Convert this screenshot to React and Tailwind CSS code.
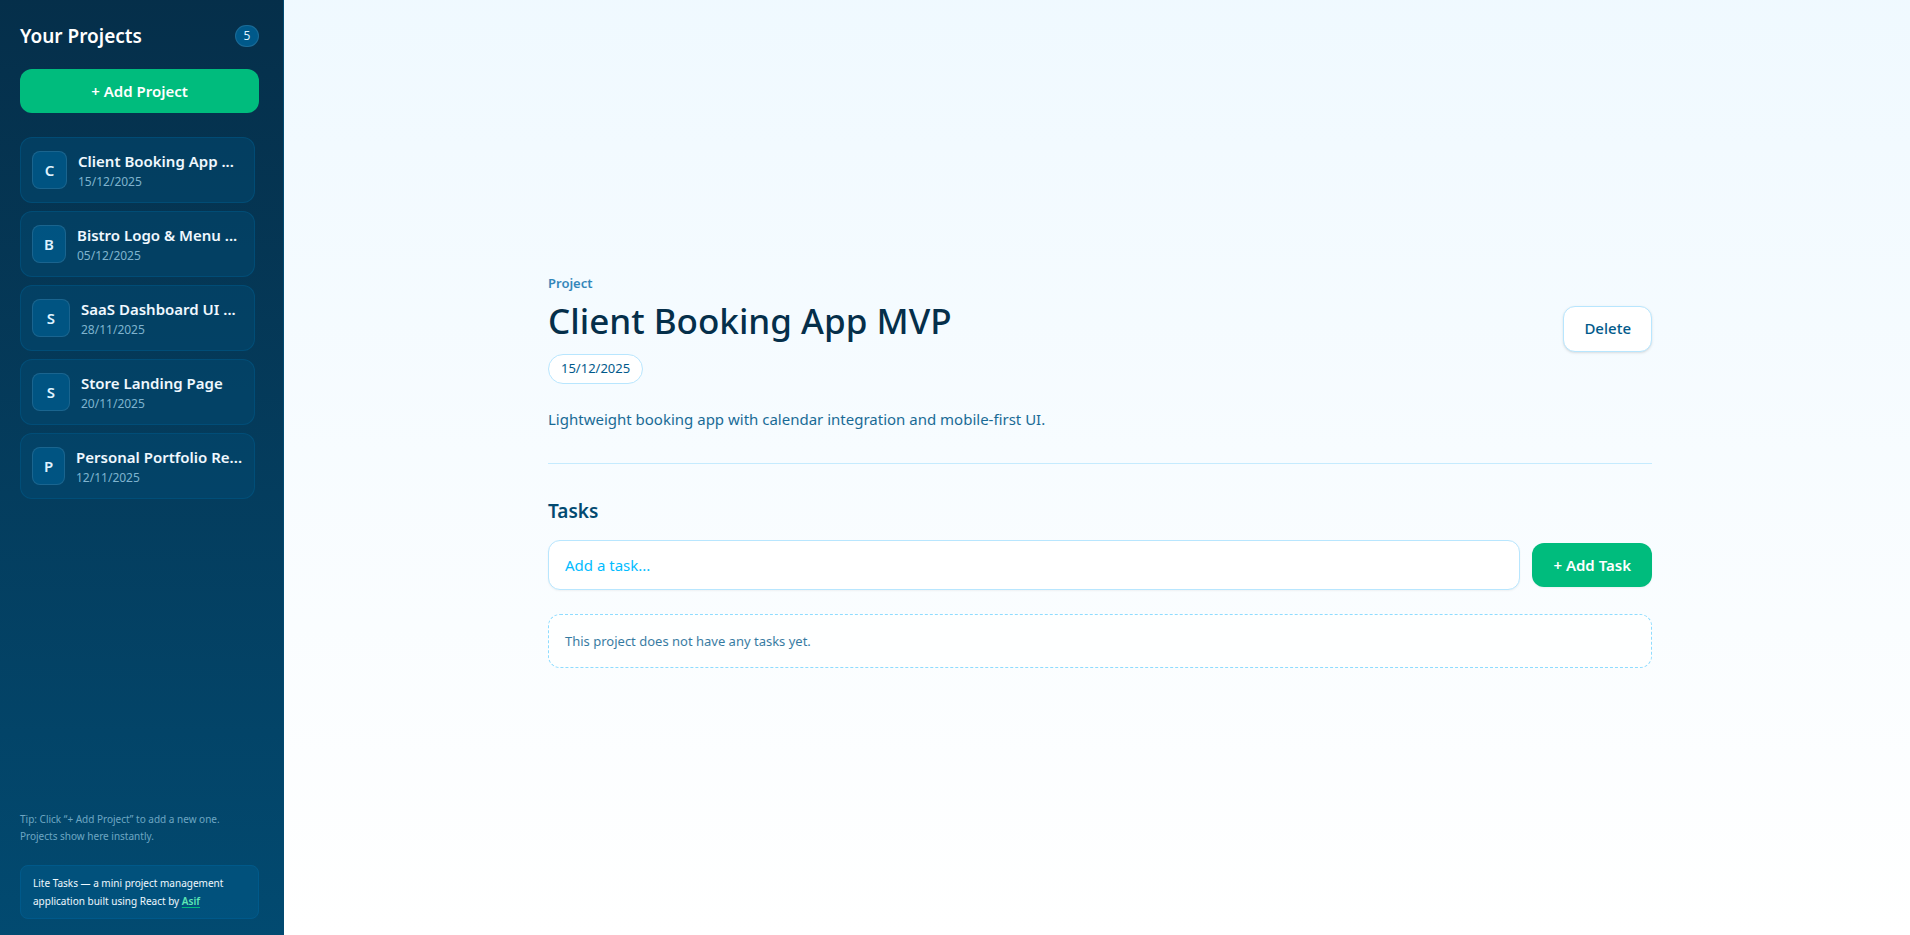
const projects = [
  { initial: 'C', title: 'Client Booking App ...', date: '15/12/2025', badge: 'w-[35px]' },
  { initial: 'B', title: 'Bistro Logo & Menu ...', date: '05/12/2025', badge: 'w-[34px]' },
  { initial: 'S', title: 'SaaS Dashboard UI ...', date: '28/11/2025', badge: 'w-[38px]' },
  { initial: 'S', title: 'Store Landing Page', date: '20/11/2025', badge: 'w-[38px]' },
  { initial: 'P', title: 'Personal Portfolio Re...', date: '12/11/2025', badge: 'w-[33px]' },
]

function ProjectCard({ project }) {
  return (
    <li>
      <button
        type="button"
        className="flex h-[66px] w-full items-center gap-[11px] rounded-xl border border-sky-800/50 bg-sky-900/50 px-[11px] text-left"
      >
        <span
          className={`flex h-[38px] shrink-0 items-center justify-center rounded-lg border border-white/10 bg-sky-800/80 text-[15px] font-semibold text-sky-100 ${project.badge}`}
        >
          {project.initial}
        </span>
        <span className="flex min-w-0 flex-col pt-0.5">
          <span className="text-[15px] leading-[22px] font-semibold whitespace-nowrap text-sky-50">{project.title}</span>
          <span className="text-[12px] leading-5 text-sky-200/70">{project.date}</span>
        </span>
      </button>
    </li>
  )
}

function Sidebar() {
  return (
    <aside className="flex w-[284px] shrink-0 flex-col border-r border-sky-900 bg-linear-to-b from-sky-950 to-sky-900 pt-[22px] pr-6 pb-4 pl-5">
      <header className="flex h-7 items-center justify-between">
        <h2 className="text-[19px] font-semibold text-white">Your Projects</h2>
        <span className="flex h-[22px] w-6 items-center justify-center rounded-full border border-white/10 bg-sky-800 text-[12px] text-sky-100">
          5
        </span>
      </header>
      <button type="button" className="mt-[19px] h-11 rounded-xl bg-emerald-500 text-[15px] font-semibold text-white">
        + Add Project
      </button>
      <ul className="mt-6 flex flex-col gap-2 pr-1">
        {projects.map((project) => (
          <ProjectCard key={project.title} project={project} />
        ))}
      </ul>
      <p className="mt-auto text-[10px] leading-[17px] text-sky-200/60">
        Tip: Click “+ Add Project” to add a new one. Projects show here instantly.
      </p>
      <footer className="mt-5 rounded-lg border border-sky-800 bg-sky-800/50 px-3 py-2 text-[10px] leading-[18px] text-sky-50">
        Lite Tasks — a mini project management application built using React by{' '}
        <a href="#asif" className="font-semibold text-emerald-300 underline decoration-emerald-500 underline-offset-2">
          Asif
        </a>
      </footer>
    </aside>
  )
}

export default function App() {
  return (
    <div className="flex min-h-screen bg-linear-to-b from-sky-50 to-white font-['Noto_Sans',sans-serif]">
      <Sidebar />
      <main className="flex flex-1 flex-col justify-center pl-1.5">
        <div className="mx-auto w-full max-w-6xl px-6 pt-1.5">
          <header className="flex items-center justify-between">
            <div>
              <p className="text-[13px] leading-5 font-semibold text-sky-700/80">Project</p>
              <h1 className="mt-2 text-[35px] leading-10 font-medium text-sky-950">Client Booking App MVP</h1>
              <p className="mt-[13px] flex h-[30px] w-fit items-center rounded-full border border-sky-200 bg-white px-3 text-[13px] text-sky-800">
                15/12/2025
              </p>
            </div>
            <button
              type="button"
              className="h-[46px] rounded-xl border border-sky-200 bg-white px-5 text-[15px] font-medium text-sky-800 shadow-sm"
            >
              Delete
            </button>
          </header>
          <p className="mt-[22px] text-[15px] leading-[26px] text-sky-800/90">
            Lightweight booking app with calendar integration and mobile-first UI.
          </p>
          <section className="mt-[31px] border-t border-sky-200/80 pt-[33px]">
            <h2 className="text-[19px] leading-7 font-semibold text-sky-900">Tasks</h2>
            <form className="mt-[15px] flex items-center gap-3">
              <input
                aria-label="New task"
                placeholder="Add a task..."
                className="h-[50px] min-w-0 flex-1 rounded-xl border border-sky-200 bg-white px-4 text-[15px] shadow-xs placeholder:text-sky-400"
              />
              <button
                type="button"
                className="h-11 rounded-xl bg-emerald-500 px-[21px] text-[15px] font-semibold text-white shadow-xs"
              >
                + Add Task
              </button>
            </form>
            <p className="mt-6 rounded-xl border border-dashed border-sky-300/80 bg-white/70 px-4 py-4 text-[13px] leading-5 text-sky-800/80">
              This project does not have any tasks yet.
            </p>
          </section>
        </div>
      </main>
    </div>
  )
}
